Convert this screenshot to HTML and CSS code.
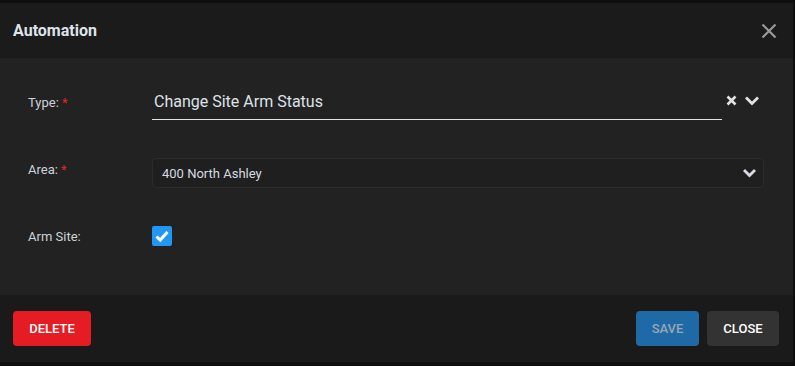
FILE: index.html
```html
<!DOCTYPE html>
<html lang="en">
  <head>
    <meta charset="UTF-8" />
    <meta name="viewport" content="width=device-width, initial-scale=1.0" />
    <title>Automation</title>
    <link rel="stylesheet" href="styles.css">
  </head>
  <body>
    <div class="behind">
      <span class="behind_cell c1">Hawthorne House</span>
      <span class="behind_cell c2 link">Hawthorne House</span>
      <span class="behind_cell c3">200</span>
      <span class="behind_cell c4">1</span>
    </div>
    <div class="modal">
      <div class="modal_header">
        <h2 class="modal_title">Automation</h2>
        <button class="icon_btn" aria-label="close">
          <svg width="16" height="16" viewBox="0 0 16 16">
            <path d="M1.5 1.5 L14.5 14.5 M14.5 1.5 L1.5 14.5" stroke="#9a9a9a" stroke-width="2.2" fill="none" />
          </svg>
        </button>
      </div>
      <div class="modal_body">
        <div class="form_row row_type">
          <label class="form_label">Type: <span class="req">*</span></label>
          <div class="type_field">
            <div class="type_value">Change Site Arm Status</div>
            <div class="type_icons">
              <svg width="11" height="11" viewBox="0 0 11 11">
                <path d="M1.5 1.5 L9.5 9.5 M9.5 1.5 L1.5 9.5" stroke="#e2e2e2" stroke-width="2.6" fill="none" />
              </svg>
              <svg width="16" height="11" viewBox="0 0 16 11">
                <path d="M2 2.5 L8 8.5 L14 2.5" stroke="#e2e2e2" stroke-width="2.8" fill="none" />
              </svg>
            </div>
          </div>
        </div>
        <div class="form_row row_area">
          <label class="form_label">Area: <span class="req">*</span></label>
          <div class="select_box">
            <span>400 North Ashley</span>
            <svg width="15" height="10" viewBox="0 0 15 10">
              <path d="M2 2 L7.5 7.5 L13 2" stroke="#d8dce2" stroke-width="2.8" fill="none" />
            </svg>
          </div>
        </div>
        <div class="form_row row_arm">
          <label class="form_label">Arm Site:</label>
          <span class="checkbox">
            <svg width="20" height="20" viewBox="0 0 20 20">
              <path d="M4.5 10.5 L8.2 14 L15.5 6" stroke="#fff" stroke-width="3" fill="none" />
            </svg>
          </span>
        </div>
      </div>
      <div class="modal_footer">
        <button class="btn btn_delete">Delete</button>
        <div class="footer_right">
          <button class="btn btn_save" disabled>Save</button>
          <button class="btn btn_close">Close</button>
        </div>
      </div>
    </div>
  </body>
</html>
```

FILE: styles.css
```css
* {
  box-sizing: border-box;
  padding: 0;
  margin: 0;
}
body {
  font-family: Roboto, "Liberation Sans", Arial, sans-serif;
  font-size: 13px;
  background-color: #0e0e0e;
  color: #d6dbe2;
  width: 795px;
  height: 366px;
  overflow: hidden;
}

.behind {
  height: 3px;
  overflow: hidden;
  position: relative;
  font-size: 14px;
  color: #6a6a6a;
}
.behind_cell {
  position: absolute;
  top: -12px;
  line-height: 14px;
}
.c1 { left: 172px; }
.c2 { left: 380px; }
.c3 { left: 588px; }
.c4 { left: 718px; }
.link { color: #4c6a8a; }

.modal {
  width: 793px;
}

.modal_header {
  height: 55px;
  background-color: #1b1b1b;
  display: flex;
  align-items: center;
  justify-content: space-between;
  padding: 0 16px 0 13px;
}
.modal_title {
  font-size: 16px;
  font-weight: 700;
  color: #dfe4ea;
}
.icon_btn {
  background: none;
  border: none;
  display: flex;
  cursor: pointer;
}

.modal_body {
  background-color: #222222;
  height: 237px;
  padding: 26px 29px 0 28px;
}
.form_row {
  display: flex;
  align-items: center;
}
.form_label {
  width: 124px;
  flex: none;
  color: #ccd2da;
  font-size: 13px;
}
.req {
  color: #e0262b;
}

.row_type {
  height: 36px;
}
.type_field {
  flex: 1;
  display: flex;
  align-items: center;
  height: 36px;
}
.type_value {
  flex: 1;
  height: 36px;
  border-bottom: 1px solid #e4e4e4;
  font-size: 16px;
  color: #dde2e8;
  padding: 8px 0 0 2px;
}
.type_icons {
  width: 42px;
  display: flex;
  align-items: center;
  gap: 7px;
  padding-left: 4px;
  margin-top: -3px;
}

.row_area {
  margin-top: 38px;
}
.row_area .form_label {
  margin-top: -8px;
}
.select_box {
  flex: 1;
  height: 30px;
  border: 1px solid #2c2c2c;
  border-radius: 4px;
  background-color: #1f1f1f;
  display: flex;
  align-items: center;
  justify-content: space-between;
  padding: 0 6px 0 9px;
  color: #d6dbe2;
  font-size: 13px;
}

.row_arm {
  margin-top: 38px;
  height: 20px;
}
.checkbox {
  width: 20px;
  height: 20px;
  background-color: #2196f3;
  border-radius: 2px;
  display: flex;
}

.modal_footer {
  height: 67px;
  background-color: #1a1a1a;
  display: flex;
  align-items: center;
  justify-content: space-between;
  padding: 0 14px 0 13px;
}
.footer_right {
  display: flex;
  gap: 8px;
}
.btn {
  height: 35px;
  border: none;
  border-radius: 4px;
  font-family: Roboto, "Liberation Sans", Arial, sans-serif;
  font-size: 13px;
  font-weight: 500;
  text-transform: uppercase;
  cursor: pointer;
}
.btn_delete {
  width: 78px;
  background-color: #e61c24;
  color: #fff;
}
.btn_save {
  width: 63px;
  background-color: #1e69a6;
  color: #9aa6b2;
  cursor: not-allowed;
}
.btn_close {
  width: 72px;
  background-color: #333333;
  color: #fff;
}
```
